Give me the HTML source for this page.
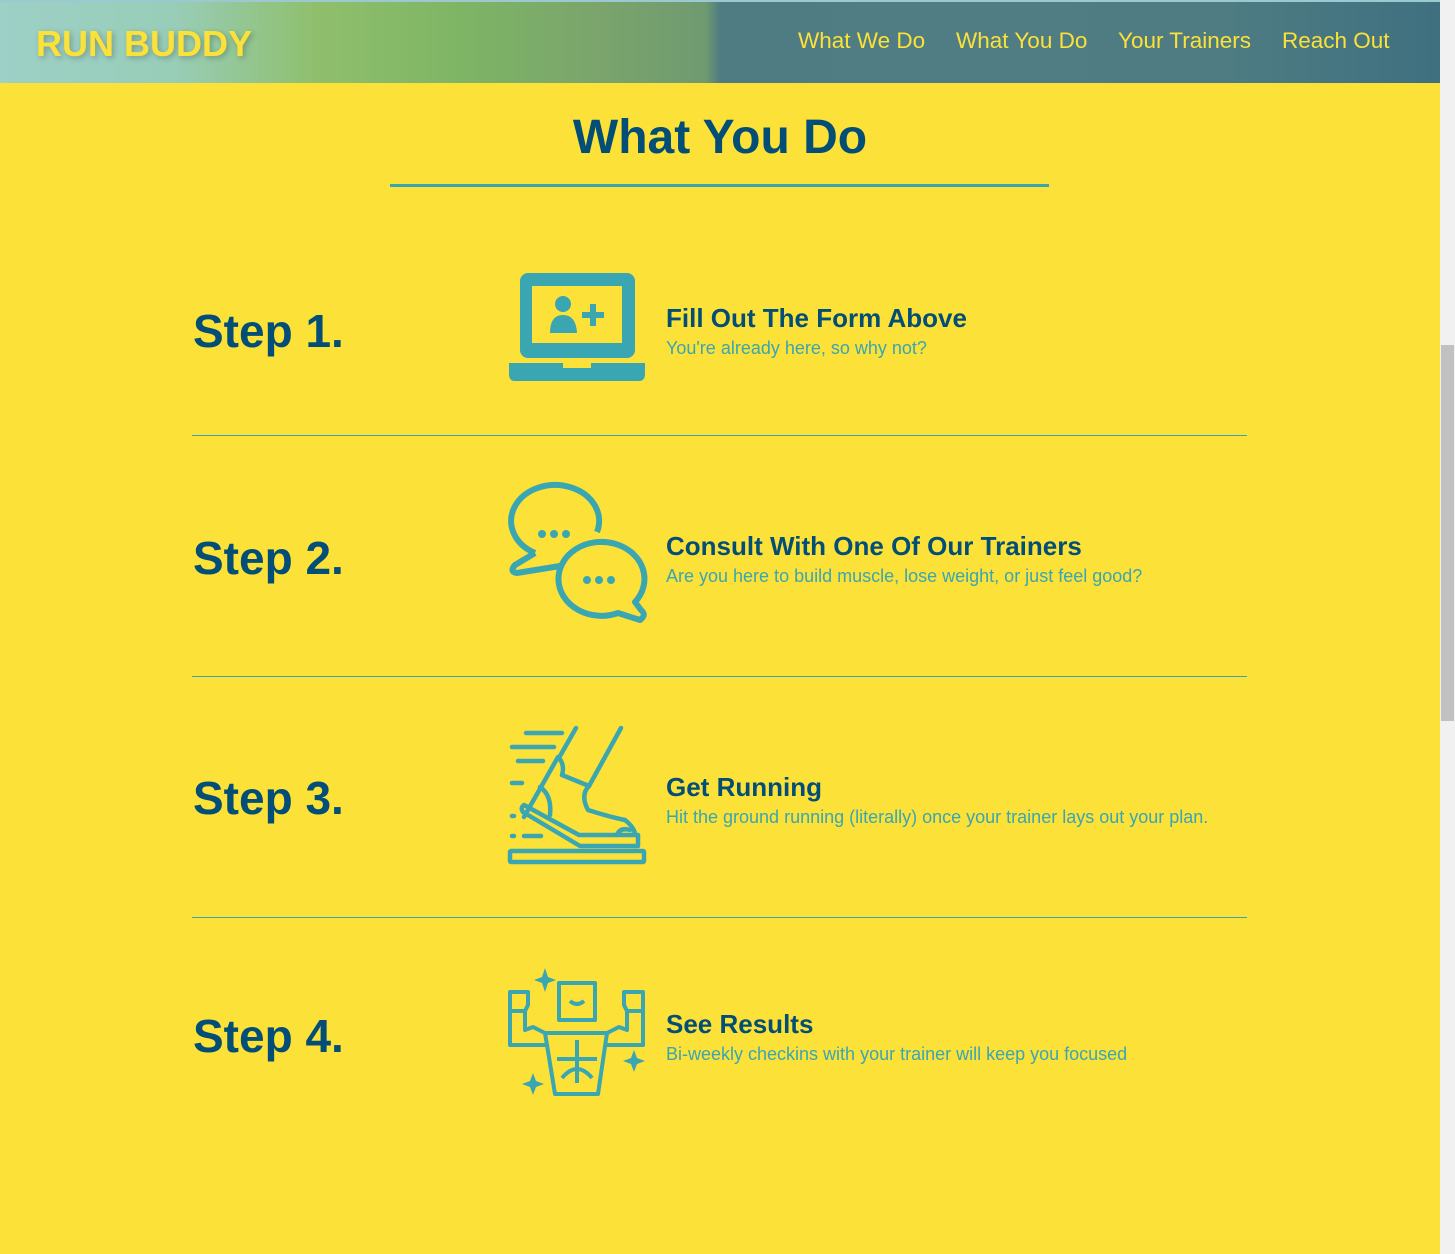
<!DOCTYPE html>
<html><head><meta charset="utf-8"><style>
*{margin:0;padding:0;box-sizing:border-box}
body{width:1455px;height:1254px;background:#fce138;font-family:"Liberation Sans",Arial,sans-serif;position:relative;overflow:hidden}
header{position:absolute;left:0;top:0;width:1440px;height:83px;background:linear-gradient(90deg,#9dd0c6 0%,#98cdb8 12%,#8fbf6c 22%,#7eb565 32%,#7aa46c 42%,#6f9a70 49%,#4f7c82 50%,#507d84 70%,#4e7c82 85%,#3f7080 100%);border-top:2px solid #9cc9cf}
.logo{position:absolute;left:36px;top:21px;font-size:36px;font-weight:bold;color:#fce138;text-shadow:2px 2px 6px rgba(0,0,0,.25)}
nav{position:absolute;top:26px;font-size:22.5px;color:#fce138}
nav span{position:absolute;white-space:nowrap}
.sb{position:absolute;left:1440px;top:0;width:15px;height:1254px;background:#f1f1f1}
.thumb{position:absolute;left:1441px;top:345px;width:13px;height:376px;background:#c1c1c1}
h1{position:absolute;left:0;width:1440px;top:110px;text-align:center;font-size:48px;color:#024e76}
.ul{position:absolute;left:390px;top:184px;width:659px;height:3px;background:#39a6b2}
.hr{position:absolute;left:192px;width:1055px;height:1px;background:#39a6b2}
.step{position:absolute;left:193px;font-size:46px;font-weight:bold;color:#024e76}
.t{position:absolute;left:666px;font-size:26px;font-weight:bold;color:#024e76}
.s{position:absolute;left:666px;font-size:18px;color:#39a6b2}
svg{position:absolute;left:500px}
</style></head><body>
<header><div class="logo">RUN BUDDY</div>
<nav><span style="left:798px">What We Do</span><span style="left:956px">What You Do</span><span style="left:1118px">Your Trainers</span><span style="left:1282px">Reach Out</span></nav></header>
<div class="sb"></div><div class="thumb"></div>
<h1>What You Do</h1><div class="ul"></div>

<div class="step" style="top:304px">Step 1.</div>
<svg style="top:260px" width="160" height="130" viewBox="0 0 160 130">
<rect x="20" y="13" width="115" height="85" rx="8" fill="#39a6b2"/>
<rect x="32" y="26" width="90" height="57" fill="#fce138"/>
<circle cx="63" cy="44" r="8" fill="#39a6b2"/>
<path d="M50 73 Q50 55 63 55 Q76 55 77 73 Z" fill="#39a6b2"/>
<rect x="90" y="44" width="6" height="22" fill="#39a6b2"/><rect x="82" y="52" width="22" height="6" fill="#39a6b2"/>
<path d="M9 103 H63 V108 H91 V103 H145 V114 Q145 121 139 121 H15 Q9 121 9 114 Z" fill="#39a6b2"/>
</svg>
<div class="t" style="top:303px">Fill Out The Form Above</div>
<div class="s" style="top:338px">You're already here, so why not?</div>
<div class="hr" style="top:435px"></div>

<div class="step" style="top:531px">Step 2.</div>
<svg style="top:480px" width="160" height="150" viewBox="0 0 160 150" fill="none" stroke="#39a6b2" stroke-width="6" stroke-linejoin="round">
<path d="M35 73 A44 36 0 1 1 97 52"/>
<path d="M35 73 L15 85 Q9 92 17 93 L60 86"/>
<path d="M135 122 A43 37 0 1 0 118 133 L140 140 Q147 135 141 130 Z" fill="#fce138"/>
<g fill="#39a6b2" stroke="none"><circle cx="42" cy="54" r="4"/><circle cx="54" cy="54" r="4"/><circle cx="66" cy="54" r="4"/><circle cx="87" cy="100" r="4"/><circle cx="99" cy="100" r="4"/><circle cx="111" cy="100" r="4"/></g>
</svg>
<div class="t" style="top:531px">Consult With One Of Our Trainers</div>
<div class="s" style="top:566px">Are you here to build muscle, lose weight, or just feel good?</div>
<div class="hr" style="top:676px"></div>

<div class="step" style="top:771px">Step 3.</div>
<svg style="top:720px" width="160" height="150" viewBox="0 0 160 150" fill="none" stroke="#39a6b2" stroke-width="4.5" stroke-linecap="round" stroke-linejoin="round">
<path d="M26 13 H62 M12 27 H54 M18 41 H43 M12 63 H22 M12 96 H14 M12 116 H14 M24 116 H41"/>
<path d="M76 8 L60 36 M121 8 L89 66"/>
<path d="M58 37 L24 97 M59 38 Q65 45 62 55 L89 66 Q80 75 88 90 Q110 97 125 100 Q135 108 135 115 H79 L24 85 Q20 88 23 92 L80 126 H138 V115"/>
<path d="M40 67 Q52 75 50 95"/>
<path d="M117 115 Q120 107 130 110"/>
<rect x="10" y="131" width="134" height="11" rx="1"/>
</svg>
<div class="t" style="top:772px">Get Running</div>
<div class="s" style="top:807px">Hit the ground running (literally) once your trainer lays out your plan.</div>
<div class="hr" style="top:917px"></div>

<div class="step" style="top:1009px">Step 4.</div>
<svg style="top:960px" width="160" height="145" viewBox="0 0 160 145" fill="none" stroke="#39a6b2" stroke-width="4" stroke-linejoin="round">
<rect x="59" y="23" width="36" height="37"/>
<path d="M70 41 Q77 47 84 41"/>
<path d="M45 73 H107 L98 134 H55 Z"/>
<path d="M77 80 V123 M57 99 H97 M62 118 Q77 100 92 118"/>
<path d="M45 73 L33 67 L25 70 V51 L28 45 V32 H10 V51 H25 M10 51 V85 H47"/>
<path d="M107 73 L119 67 L127 70 V51 L124 45 V32 H143 V51 H127 M143 51 V85 H105"/>
<g fill="#39a6b2" stroke="none">
<path d="M45 8 L48 17 L56 20 L48 23 L45 32 L42 23 L34 20 L42 17 Z"/>
<path d="M134 90 L137 98 L145 101 L137 104 L134 112 L131 104 L123 101 L131 98 Z"/>
<path d="M33 113 L36 121 L44 124 L36 127 L33 135 L30 127 L22 124 L30 121 Z"/>
</g>
</svg>
<div class="t" style="top:1009px">See Results</div>
<div class="s" style="top:1044px">Bi-weekly checkins with your trainer will keep you focused</div>
</body></html>
